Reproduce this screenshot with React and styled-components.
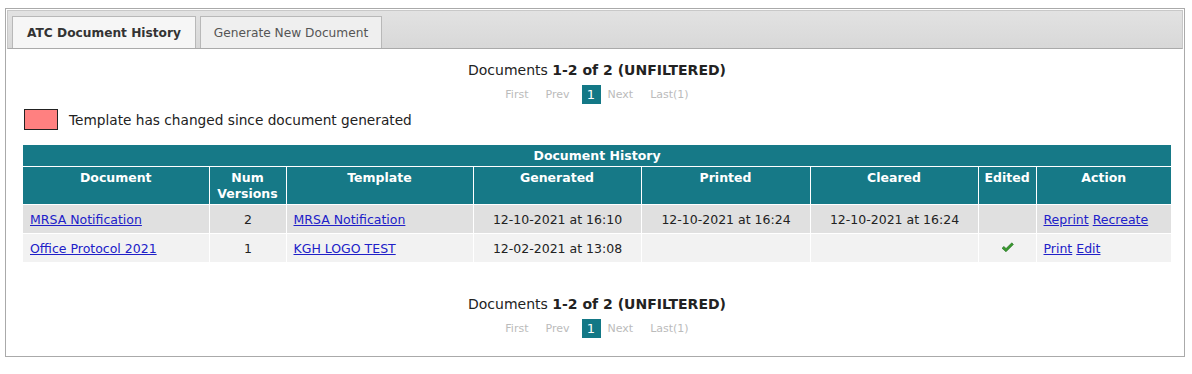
import React from 'react';
import styled, { createGlobalStyle } from 'styled-components';

const GlobalStyle = createGlobalStyle`
  body {
    margin: 0;
    background: #fff;
    font-family: "DejaVu Sans", Verdana, sans-serif;
    color: #222;
  }
`;

const columns = [
  { title: 'Document', width: 186 },
  { title: 'Num Versions', width: 77 },
  { title: 'Template', width: 187 },
  { title: 'Generated', width: 168 },
  { title: 'Printed', width: 169 },
  { title: 'Cleared', width: 168 },
  { title: 'Edited', width: 58 },
  { title: 'Action', width: 135 },
];

const rows = [
  {
    document: 'MRSA Notification',
    versions: 2,
    template: 'MRSA Notification',
    generated: '12-10-2021 at 16:10',
    printed: '12-10-2021 at 16:24',
    cleared: '12-10-2021 at 16:24',
    edited: false,
    actions: ['Reprint', 'Recreate'],
  },
  {
    document: 'Office Protocol 2021',
    versions: 1,
    template: 'KGH LOGO TEST',
    generated: '12-02-2021 at 13:08',
    printed: '',
    cleared: '',
    edited: true,
    actions: ['Print', 'Edit'],
  },
];

const Panel = styled.div`
  margin: 8px 0 0 5px;
  width: 1176px;
  border: 1px solid #aaa;
  padding: 1px;
  background: #fff;
`;

const TabBar = styled.div`
  display: flex;
  gap: 4px;
  align-items: flex-end;
  height: 32px;
  padding: 5px 5px 0 4px;
  border: 1px solid #c8c8c8;
  border-bottom-color: #aaa;
  background: linear-gradient(#e2e2e2, #d8d8d8);
`;

const Tab = styled.div`
  box-sizing: border-box;
  display: flex;
  align-items: center;
  justify-content: center;
  width: ${(p) => p.$width}px;
  height: 32px;
  border: 1px solid #b8b8b8;
  border-bottom: none;
  background: ${(p) => (p.$active ? '#f6f6f6' : '#efefef')};
  color: ${(p) => (p.$active ? '#333' : '#555')};
  font-size: 12.2px;
  font-weight: ${(p) => (p.$active ? 'bold' : 'normal')};
  white-space: nowrap;
`;

const Content = styled.div`
  padding: 13px 9px 17px 9px;
`;

const Summary = styled.div`
  display: flex;
  flex-direction: column;
  align-items: center;
  gap: 7px;
  padding-left: 4px;
  font-size: 14px;
  color: #222;
  margin-top: ${(p) => p.$top || 0}px;
`;

const Pager = styled.div`
  display: flex;
  align-items: center;
  font-size: 11px;
  color: #bbb;
`;

const PagerItem = styled.span`
  margin-right: ${(p) => p.$after || 0}px;
`;

const CurrentPage = styled.span`
  display: inline-flex;
  align-items: center;
  justify-content: center;
  width: 19px;
  height: 19px;
  margin-right: 7px;
  background: #137886;
  color: #fff;
  font-size: 13px;
`;

const Legend = styled.div`
  display: flex;
  align-items: center;
  gap: 11px;
  margin: 5px 0 0 8px;
  font-size: 13.7px;
  color: #222;
`;

const Swatch = styled.span`
  width: 32px;
  height: 19px;
  background: #ff8080;
  border: 1px solid #222;
`;

const Table = styled.table`
  margin: 15px 0 0 7px;
  width: 1148px;
  border-collapse: collapse;
  table-layout: fixed;
  font-size: 12.5px;
`;

const Caption = styled.th`
  background: #167987;
  color: #fff;
  font-weight: bold;
  height: 21px;
  padding: 0;
  border-bottom: 1px solid #fff;
`;

const HeadCell = styled.th`
  background: #167987;
  color: #fff;
  font-weight: bold;
  vertical-align: top;
  padding: 3px 4px 2px;
  height: 37px;
  box-sizing: border-box;
  line-height: 16px;
  border-left: 1px solid #fff;
  &:first-child { border-left: none; }
`;

const Row = styled.tr`
  background: ${(p) => (p.$alt ? '#f2f2f2' : '#e0e0e0')};
`;

const Cell = styled.td`
  height: 28px;
  padding: 0 6px 0 7px;
  text-align: ${(p) => p.$align || 'left'};
  border-left: 1px solid #fff;
  border-top: 1px solid #fff;
  color: #222;
  white-space: nowrap;
  &:first-child { border-left: none; }
`;

const LinkText = styled.a`
  color: #2020c8;
  text-decoration: underline;
  & + & { margin-left: 4px; }
`;

const Check = () => (
  <svg width="13" height="11" viewBox="0 0 13 11">
    <path
      d="M1 6.2 L3 4.4 L5 6.6 L10.8 0.8 L12.4 2.4 L5 9.8 Z"
      fill="#3a9a2e"
      stroke="#1e6a1e"
      strokeWidth="0.6"
    />
  </svg>
);

const Pagination = ({ top }) => (
  <Summary $top={top}>
    <div>
      Documents <b>1-2 of 2 (UNFILTERED)</b>
    </div>
    <Pager>
      <PagerItem $after={17}>First</PagerItem>
      <PagerItem $after={12}>Prev</PagerItem>
      <CurrentPage>1</CurrentPage>
      <PagerItem $after={17}>Next</PagerItem>
      <PagerItem>Last(1)</PagerItem>
    </Pager>
  </Summary>
);

export default function App() {
  return (
    <>
      <GlobalStyle />
      <Panel>
        <TabBar>
          <Tab $active $width={184}>ATC Document History</Tab>
          <Tab $width={182}>Generate New Document</Tab>
        </TabBar>
        <Content>
          <Pagination />
          <Legend>
            <Swatch />
            Template has changed since document generated
          </Legend>
          <Table>
            <colgroup>
              {columns.map((c) => (
                <col key={c.title} style={{ width: c.width }} />
              ))}
            </colgroup>
            <thead>
              <tr>
                <Caption colSpan={columns.length}>Document History</Caption>
              </tr>
              <tr>
                {columns.map((c) => (
                  <HeadCell key={c.title}>{c.title}</HeadCell>
                ))}
              </tr>
            </thead>
            <tbody>
              {rows.map((r, i) => (
                <Row key={r.document} $alt={i % 2 === 1}>
                  <Cell><LinkText href="#">{r.document}</LinkText></Cell>
                  <Cell $align="center">{r.versions}</Cell>
                  <Cell><LinkText href="#">{r.template}</LinkText></Cell>
                  <Cell $align="center">{r.generated}</Cell>
                  <Cell $align="center">{r.printed}</Cell>
                  <Cell $align="center">{r.cleared}</Cell>
                  <Cell $align="center">{r.edited && <Check />}</Cell>
                  <Cell>
                    {r.actions.map((a) => (
                      <LinkText key={a} href="#">{a}</LinkText>
                    ))}
                  </Cell>
                </Row>
              ))}
            </tbody>
          </Table>
          <Pagination top={34} />
        </Content>
      </Panel>
    </>
  );
}
